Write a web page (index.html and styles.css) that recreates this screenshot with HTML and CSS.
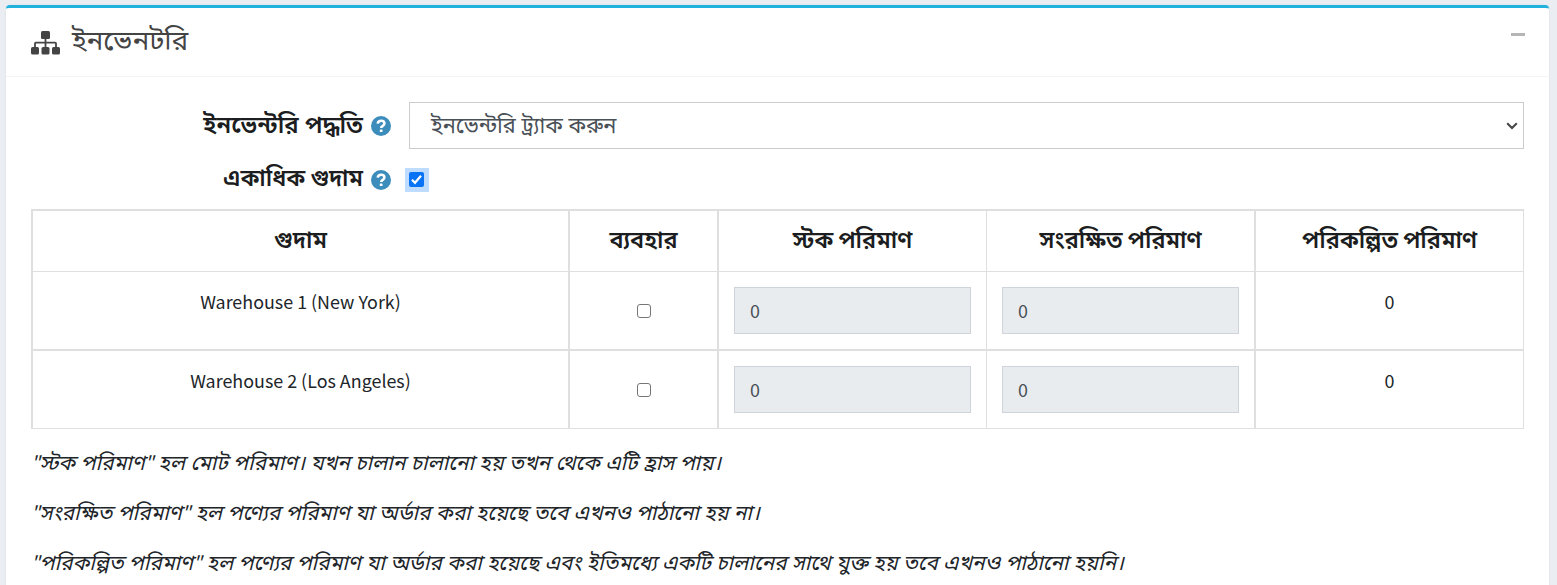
FILE: index.html
```html
<!DOCTYPE html>
<html lang="bn">
<head><meta charset="utf-8"><title>ইনভেনটরি</title><link rel="stylesheet" href="styles.css"></head>
<body>
<section class="card">
  <header class="card-header">
    <svg class="sitemap" viewBox="0 0 29 24"><rect x="10" y="0" width="9" height="8" rx="1.500"/><rect x="0" y="16" width="8" height="7.500" rx="1.500"/><rect x="10.500" y="16" width="8" height="7.500" rx="1.500"/><rect x="21" y="16" width="8" height="7.500" rx="1.500"/><path d="M14.500 7v10M4 17v-4.500q0-.8.8-.8h19.400q.8 0 .8.8V17" fill="none" stroke="#444" stroke-width="1.800"/></svg>
    <h1>ইনভেনটরি</h1>
    <span class="minus"></span>
  </header>
  <div class="card-body">
    <div class="row method">
      <div class="label">ইনভেন্টরি পদ্ধতি</div>
      <svg class="help" viewBox="0 0 20 20"><circle cx="10" cy="10" r="10"/><path d="M6.700 7.600C7 5.500 8.300 4.700 10.100 4.700c1.900 0 3.300 1.100 3.300 2.700 0 2.500-3.200 2.400-3.200 4.600"/><rect x="8.800" y="13.400" width="2.700" height="2.700" rx=".6"/></svg>
      <div class="select"><span>ইনভেন্টরি ট্র্যাক করুন</span><svg class="chevron" viewBox="0 0 12 8"><path d="M1.200 1.200 6 6l4.800-4.800"/></svg></div>
    </div>
    <div class="row multi">
      <div class="label">একাধিক গুদাম</div>
      <svg class="help" viewBox="0 0 20 20"><circle cx="10" cy="10" r="10"/><path d="M6.700 7.600C7 5.500 8.300 4.700 10.100 4.700c1.900 0 3.300 1.100 3.300 2.700 0 2.500-3.200 2.400-3.200 4.600"/><rect x="8.800" y="13.400" width="2.700" height="2.700" rx=".6"/></svg>
      <span class="focus"><svg viewBox="0 0 15 15"><rect width="15" height="15" rx="2"/><path d="M3 7.800 6 10.800 12 3.800"/></svg></span>
    </div>
    <div class="table">
      <div class="cell head">গুদাম</div><div class="cell head">ব্যবহার</div><div class="cell head">স্টক পরিমাণ</div><div class="cell head">সংরক্ষিত পরিমাণ</div><div class="cell head">পরিকল্পিত পরিমাণ</div>
      <div class="cell">Warehouse 1 (New York)</div><div class="cell use"><span class="box"></span></div><div class="cell field"><div class="input">0</div></div><div class="cell field"><div class="input">0</div></div><div class="cell">0</div>
      <div class="cell">Warehouse 2 (Los Angeles)</div><div class="cell use"><span class="box"></span></div><div class="cell field"><div class="input">0</div></div><div class="cell field"><div class="input">0</div></div><div class="cell">0</div>
    </div>
    <p>"স্টক পরিমাণ" হল মোট পরিমাণ। যখন চালান চালানো হয় তখন থেকে এটি হ্রাস পায়।</p>
    <p>"সংরক্ষিত পরিমাণ" হল পণ্যের পরিমাণ যা অর্ডার করা হয়েছে তবে এখনও পাঠানো হয় না।</p>
    <p>"পরিকল্পিত পরিমাণ" হল পণ্যের পরিমাণ যা অর্ডার করা হয়েছে এবং ইতিমধ্যে একটি চালানের সাথে যুক্ত হয় তবে এখনও পাঠানো হয়নি।</p>
  </div>
</section>
</body>
</html>
```

FILE: styles.css
```css
*{box-sizing:border-box}
body{margin:0;height:585px;overflow:hidden;background:#eaeef2;font-family:"Noto Sans Bengali","Noto Sans",sans-serif;color:#212529}
svg{display:block;flex:none}
.card{margin:5px 8px 0 6px;height:600px;border-top:3px solid #20b2dc;border-radius:4px;background:#fff;box-shadow:0 0 2px #d5dae0}
.card-header{display:flex;height:69px;padding:0 24px 0 25px;border-bottom:1px solid #f4f4f4}
.sitemap{width:29px;height:24px;margin-top:23px;fill:#444}
h1{margin:15px 0 0 12px;font-size:27.600px;line-height:40px;font-weight:400;color:#444}
.minus{width:14px;height:3px;margin:25px 0 0 auto;background:#b5b5b5}
.card-body{padding:25px 25px 0}
.row{display:flex}
.method{height:47px}
.multi{height:60px}
.label{width:332px;text-align:right;font-size:24px;line-height:50px;font-weight:600;white-space:nowrap;color:#1b1d20}
.multi .label{font-size:23.400px;line-height:64px;word-spacing:-1px}
.help{width:20px;height:20px;margin:14px 18px 0 8px;fill:#3c8dbc}
.multi .help{margin:21px 14px 0 8px}
.help path{fill:none;stroke:#fff;stroke-width:2.600}
.help rect{fill:#fff}
.select{display:flex;flex:1;height:47px;border:1px solid #ccc;padding:0 5px 0 21px;font-size:21.800px;line-height:50px;color:#495057;justify-content:space-between}
.chevron{width:12px;height:8px;margin-top:19px;fill:none;stroke:#444;stroke-width:2}
.focus{width:24px;height:24px;margin-top:19px;padding:4px;background:#bedcff}
.focus svg{width:15px;height:15px;fill:#0874f5}
.focus path{fill:none;stroke:#fff;stroke-width:2.200}
.table{display:grid;grid-template-columns:537px 149px 269px 268px 269px;grid-template-rows:62px 78px 79px;width:1493px;border:solid #dfdfdf;border-width:0 1px 1px 0}
.cell{border:0 solid #dfdfdf;border-width:1px 0 0 2px;text-align:center;font-family:"Noto Sans CJK SC",sans-serif;font-size:17.900px;line-height:26px;padding-top:16px}
.cell:nth-child(5n+4){border-left-width:1px}
.cell:nth-child(n+11),.head{border-top-width:2px}
.head{font-family:"Noto Sans Bengali","Noto Sans",sans-serif;font-size:23.500px;font-weight:600;line-height:62px;word-spacing:-1px;padding:0;color:#1b1d20}
.field{padding:15px 15px 0}
.input{width:237px;height:47px;border:1px solid #ced4da;background:#e9ecef;text-align:left;padding-left:15px;line-height:44px;color:#495057}
.use{display:flex;justify-content:center;padding:32px 0 0}
.box{width:14px;height:14px;border:1px solid #767676;border-radius:3px}
p{margin:0;padding-top:9px;height:50px;font-size:20.850px;line-height:54px;font-style:italic;white-space:nowrap}
```
